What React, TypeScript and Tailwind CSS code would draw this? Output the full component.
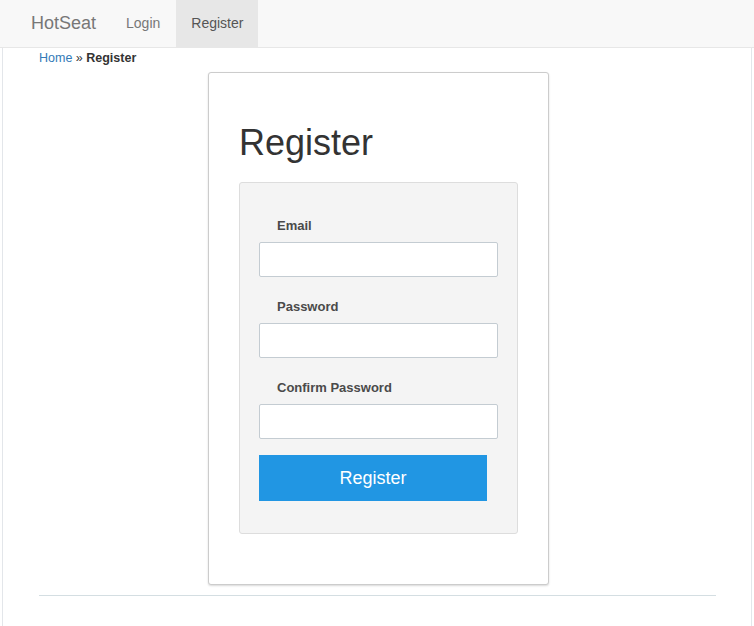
export default function App() {
  const fields = ["Email", "Password", "Confirm Password"];
  return (
    <div className="min-h-[626px] bg-white font-['Liberation_Sans',Arial,sans-serif] text-[#333]">
      <nav className="flex h-[48px] items-stretch border-b border-[#e7e7e7] bg-[#f8f8f8]">
        <span className="ml-[31px] flex items-center text-[18px] text-[#777]">HotSeat</span>
        <a className="ml-[30px] flex items-center text-[14px] text-[#777]">Login</a>
        <a className="ml-[16px] flex items-center bg-[#e7e7e7] px-[15px] text-[14px] text-[#555]">
          Register
        </a>
      </nav>
      <div className="mx-[2px] min-h-[578px] border-x border-[#e3e6ea] pl-[36px] pr-[35px]">
        <div className="pt-[2px] text-[12.5px] leading-[16px]">
          <a className="text-[#337ab7]">Home</a>
          <span className="text-[#333]"> » </span>
          <b className="text-[#333]">Register</b>
        </div>
        <div className="mt-[6px] ml-[169px] w-[341px] rounded-[3px] border border-[#cccccc] bg-white px-[30px] pt-[50px] pb-[50px] shadow-[0_1px_2px_rgba(0,0,0,0.15)]">
          <h1 className="text-[36px] leading-[40px] text-[#333]">Register</h1>
          <div className="mt-[19px] rounded-[3px] border border-[#dddddd] bg-[#f4f4f4] px-[19px] pt-[34px] pb-[32px]">
            {fields.map((f, i) => (
              <div key={f} className={i > 0 ? "mt-[21px]" : ""}>
                <label className="ml-[18px] block text-[13px] font-bold leading-[18px] text-[#4a4a4a]">{f}</label>
                <input
                  type={f === "Email" ? "text" : "password"}
                  className="mt-[7px] block h-[35px] w-[239px] rounded-[2px] border border-[#c4ccd2] bg-white"
                />
              </div>
            ))}
            <button className="mt-[16px] h-[46px] w-[228px] bg-[#2196e3] text-[18px] text-white">Register</button>
          </div>
        </div>
        <hr className="mt-[10px] border-t border-[#d4dee2]" />
      </div>
    </div>
  );
}
